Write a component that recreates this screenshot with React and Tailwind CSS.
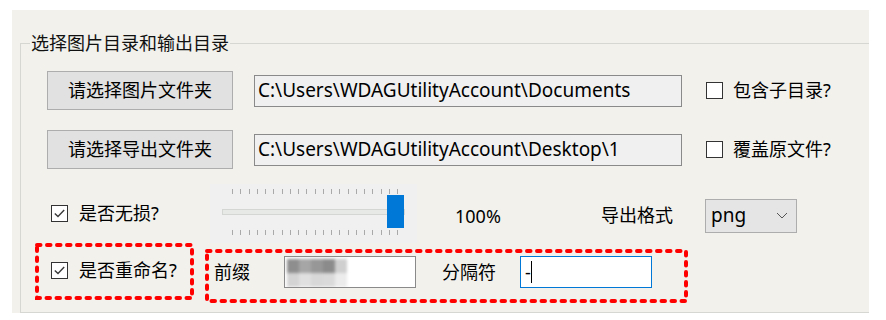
import React from "react";

const font = "font-['Noto_Sans','Noto_Sans_CJK_SC',sans-serif]";

function Check({ checked }) {
  return (
    <span className="w-[17px] h-[17px] border border-[#333] bg-white flex items-center justify-center shrink-0">
      {checked && (
        <svg width="13" height="13" viewBox="0 0 13 13">
          <path d="M1.8 6.4 L5 9.6 L11.2 3" fill="none" stroke="#3a3a3a" strokeWidth="1.4" />
        </svg>
      )}
    </span>
  );
}

function DashedBox({ w, h, className, children }) {
  return (
    <div className={"relative " + className}>
      {children}
      <svg className="absolute inset-0 pointer-events-none" width={w} height={h}>
        <rect
          x="2"
          y="2"
          width={w - 4}
          height={h - 4}
          fill="none"
          stroke="#ff0000"
          strokeWidth="4"
          strokeDasharray="3.5 6.5"
          strokeLinecap="round"
        />
      </svg>
    </div>
  );
}

function Ticks() {
  return (
    <div className="flex justify-between w-[166px] ml-[22px] h-[5px]">
      {Array.from({ length: 21 }).map((_, i) => (
        <span key={i} className="w-px h-[5px] bg-[#a9a9a9]" />
      ))}
    </div>
  );
}

function PathRow({ label, path, check }) {
  return (
    <div className="flex items-center h-[39px] ml-[26px]">
      <button className="w-[186px] h-[39px] bg-[#e1e1e1] border border-[#adadad] text-[18px] text-black">
        {label}
      </button>
      <div className="ml-[21px] w-[428px] h-[32px] bg-[#f0f0f0] border border-[#8a8a8a] pl-[3px] flex items-center text-[19px] text-black whitespace-nowrap overflow-hidden">
        {path}
      </div>
      <div className="ml-[24px]">
        <Check />
      </div>
      <span className="ml-[10px] text-[18px] text-black">{check}</span>
    </div>
  );
}

export default function App() {
  return (
    <div className={"w-[886px] h-[320px] bg-white pt-[10px] pl-[12px] overflow-hidden " + font}>
      <div className="w-[857px] h-[303px] bg-[#f2f1ec] pt-[21px] pl-[8px] flex flex-col">
        <fieldset className="flex-1 border-t border-l border-b border-[#d6d6d3] min-w-0">
          <legend className="ml-[9px] px-px text-[18px] leading-[24px] text-[#111]">
            选择图片目录和输出目录
          </legend>

          <div className="mt-[16px]">
            <PathRow label="请选择图片文件夹" path="C:\Users\WDAGUtilityAccount\Documents" check="包含子目录?" />
          </div>
          <div className="mt-[20px]">
            <PathRow label="请选择导出文件夹" path="C:\Users\WDAGUtilityAccount\Desktop\1" check="覆盖原文件?" />
          </div>

          {/* quality row */}
          <div className="mt-[15px] ml-[30px] h-[59px] flex items-center text-[18px] text-black">
            <div className="w-[159px] flex items-center">
              <Check checked />
              <span className="ml-[11px]">是否无损?</span>
            </div>
            <div className="w-[207px] h-[59px] bg-[#f0f0f0] pt-[5px] flex flex-col">
              <Ticks />
              <div className="relative ml-[12px] mt-[15px] w-[183px] h-[6px] bg-[#e7e9e7] border border-[#d4d6d4]">
                <span className="absolute left-[164px] top-[-15px] w-[17px] h-[33px] bg-[#0078d7]" />
              </div>
              <div className="mt-[15px]">
                <Ticks />
              </div>
            </div>
            <div className="w-[184px] pl-[38px] pt-[5px]">100%</div>
            <div className="w-[104px] pt-[4px]">导出格式</div>
            <div className="mt-[4px] w-[92px] h-[34px] bg-[#e5e5e5] border border-[#adadad] flex items-center pl-[5px] pr-[8px] justify-between">
              <span className="text-[19px]">png</span>
              <svg width="12" height="7" viewBox="0 0 12 7">
                <path d="M1 1 L6 6 L11 1" fill="none" stroke="#555" strokeWidth="1" />
              </svg>
            </div>
          </div>

          {/* rename row */}
          <div className="ml-[14px] flex items-start text-[18px] text-black">
            <DashedBox w={159} h={57} className="w-[159px] h-[57px] flex items-center pl-[16px] pb-[3px]">
              <Check checked />
              <span className="ml-[11px]">是否重命名?</span>
            </DashedBox>
            <DashedBox w={483} h={54} className="ml-[11px] mt-[6px] w-[483px] h-[54px] flex items-center pl-[9px] pb-[8px]">
              <span className="w-[70px]">前缀</span>
              <div className="w-[132px] h-[32px] bg-white border border-[#8a8a8a] relative overflow-hidden">
                <div className="absolute left-[2px] top-[2px] w-[62px] h-[28px] flex flex-col blur-[1.5px]">
                  <div className="flex h-[14px]">
                    <span className="w-[12px] bg-[#8e8e8e]" />
                    <span className="w-[12px] bg-[#a6a6a6]" />
                    <span className="w-[12px] bg-[#979797]" />
                    <span className="w-[12px] bg-[#8b8b8b]" />
                    <span className="w-[12px] bg-[#cfcfcf]" />
                  </div>
                  <div className="flex h-[14px]">
                    <span className="w-[12px] bg-[#d4d4d4]" />
                    <span className="w-[12px] bg-[#e0e0e0]" />
                    <span className="w-[12px] bg-[#d8d8d8]" />
                    <span className="w-[12px] bg-[#dadada]" />
                    <span className="w-[12px] bg-[#ececec]" />
                  </div>
                </div>
              </div>
              <span className="ml-[26px] w-[78px]">分隔符</span>
              <div className="w-[132px] h-[32px] bg-white border border-[#0078d7] flex items-center pl-[4px]">
                <span>-</span>
                <span className="w-px h-[22px] bg-black" />
              </div>
            </DashedBox>
          </div>
        </fieldset>
      </div>
    </div>
  );
}
